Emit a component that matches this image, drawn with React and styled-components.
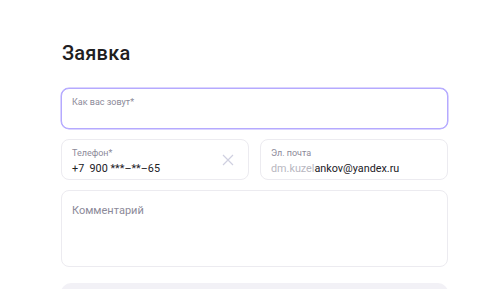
import React from "react";
import styled, { createGlobalStyle } from "styled-components";

const Global = createGlobalStyle`
  html, body { margin: 0; padding: 0; background: #fff; }
  body { font-family: Roboto, "Liberation Sans", sans-serif; color: #21201f; }
`;

const Page = styled.div`
  width: 500px;
  height: 289px;
  overflow: hidden;
  box-sizing: border-box;
  padding: 40px 52px 0 61px;
`;

const Title = styled.h1`
  margin: 0 0 21px 1px;
  font-size: 20px;
  line-height: 27px;
  font-weight: 500;
  letter-spacing: 0.2px;
  color: #21201f;
`;

const Form = styled.div`
  display: flex;
  flex-direction: column;
  gap: 10px;
`;

const Row = styled.div`
  display: grid;
  grid-template-columns: 1fr 1fr;
  gap: 11px;
`;

const Field = styled.div`
  position: relative;
  box-sizing: border-box;
  height: ${(p) => p.$h || 41}px;
  border: 1px solid ${(p) => (p.$focused ? "#b5aaff" : "#ecebf0")};
  box-shadow: ${(p) => (p.$focused ? "0 0 0 0.5px #b5aaff" : "none")};
  border-radius: 8px;
  background: #fff;
  padding: ${(p) => p.$pad || "7px 10px 0 10px"};
  display: flex;
  flex-direction: column;
`;

const Label = styled.div`
  font-size: ${(p) => (p.$big ? 11 : 9)}px;
  line-height: ${(p) => (p.$big ? 14 : 12)}px;
  color: #8c8a99;
`;

const Value = styled.div`
  font-size: 10.8px;
  line-height: 15px;
  color: #21201f;
  margin-top: 2px;
  white-space: pre;
`;

const Blur = styled.span`
  color: #b8b7bf;
`;

const Clear = styled.svg`
  position: absolute;
  right: 14px;
  top: 14px;
  width: 12px;
  height: 12px;
`;

const Button = styled.div`
  margin-top: 6px;
  height: 40px;
  border-radius: 10px;
  background: #f2f1f6;
`;

export default function App() {
  return (
    <Page>
      <Global />
      <Title>Заявка</Title>
      <Form>
        <Field $focused>
          <Label>Как вас зовут*</Label>
        </Field>
        <Row>
          <Field>
            <Label>Телефон*</Label>
            <Value>{"+7  900 ***–**–65"}</Value>
            <Clear viewBox="0 0 12 12">
              <path d="M1 1L11 11M11 1L1 11" stroke="#cfd0e0" strokeWidth="1.2" fill="none" />
            </Clear>
          </Field>
          <Field>
            <Label>Эл. почта</Label>
            <Value>
              <Blur>dm.kuzel</Blur>ankov@yandex.ru
            </Value>
          </Field>
        </Row>
        <Field $h={77} $pad="13px 10px 0 10px">
          <Label $big>Комментарий</Label>
        </Field>
        <Button />
      </Form>
    </Page>
  );
}
